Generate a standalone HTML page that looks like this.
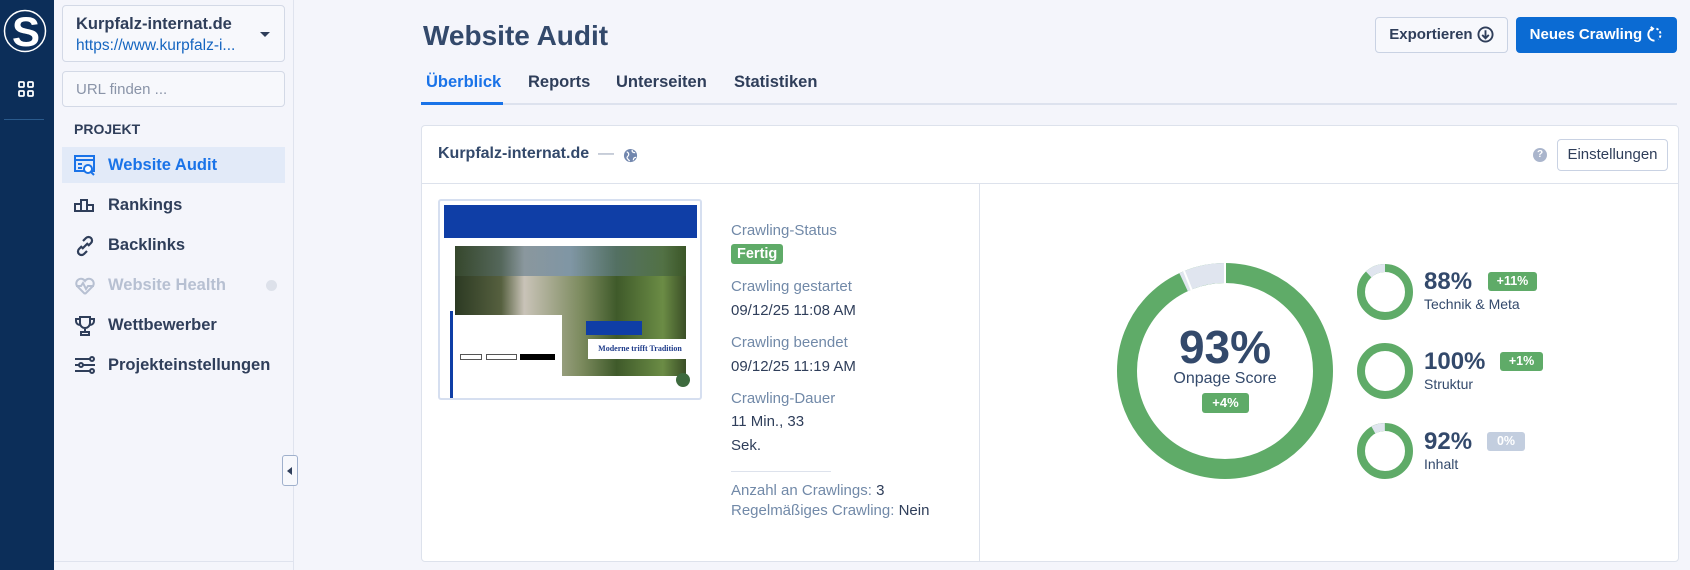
<!DOCTYPE html>
<html><head><meta charset="utf-8"><style>
*{box-sizing:border-box;margin:0;padding:0}
body{width:1690px;height:570px;overflow:hidden;background:#f4f5fb;font-family:"Liberation Sans",Arial,sans-serif;color:#2f3e5a;position:relative}
.abs{position:absolute}
.rail{left:0;top:0;width:54px;height:570px;background:#0c2e59}
.side{left:54px;top:0;width:240px;height:570px;background:#f4f5fb;border-right:1px solid #dfe3ee}
.sel{left:8px;top:5px;width:223px;height:57px;border:1px solid #d3d9e6;border-radius:4px;background:#f7f8fc}
.search{left:8px;top:71px;width:223px;height:36px;border:1px solid #d3d9e6;border-radius:4px;background:#f7f8fc;color:#8a94a8;font-size:15px;padding:9px 13px}
.nav{left:8px;width:223px;height:36px;font-size:16.5px;font-weight:bold;color:#2f3e5a;padding-left:46px;line-height:36px}
.nav svg{position:absolute;left:12px;top:8px}
.btn{border:1px solid #c9d2e3;border-radius:4px;background:#f7f8fc;font-size:15px;font-weight:bold;text-align:center}
.card{left:421px;top:125px;width:1258px;height:437px;background:#fff;border:1px solid #dde2ec;border-radius:4px}
.lbl{font-size:15px;color:#7189a8}
.val{font-size:15px;color:#2f3e5a}
.badge{display:inline-block;background:#5fab68;color:#fff;font-weight:bold;border-radius:3px}
</style></head><body>
<div class="abs rail">
  <svg class="abs" style="left:3px;top:9px" width="44" height="44" viewBox="0 0 44 44"><circle cx="22" cy="22" r="20.5" fill="#0c2e59" stroke="#fff" stroke-width="1.5"/><text x="23" y="37" text-anchor="middle" font-family="Liberation Sans" font-weight="bold" font-size="42" fill="#fff">S</text></svg>
  <svg class="abs" style="left:17px;top:80px" width="18" height="18" viewBox="0 0 18 18" fill="none" stroke="#fff" stroke-width="1.8"><rect x="2" y="2" width="5" height="5" rx="1"/><rect x="11" y="2" width="5" height="5" rx="1"/><rect x="2" y="11" width="5" height="5" rx="1"/><rect x="11" y="11" width="5" height="5" rx="1"/></svg>
  <div class="abs" style="left:4px;top:119px;width:40px;height:1px;background:#2a5a8c"></div>
</div>
<div class="abs side">
  <div class="abs sel"><div style="position:absolute;left:13px;top:9px;font-size:16.5px;font-weight:bold;color:#2f3e5a">Kurpfalz-internat.de</div><div style="position:absolute;left:13px;top:31px;font-size:15.5px;color:#1565c0">https://www.kurpfalz-i...</div><div style="position:absolute;right:14px;top:26px;width:0;height:0;border-left:5px solid transparent;border-right:5px solid transparent;border-top:5px solid #2f3e5a"></div></div>
  <div class="abs search">URL finden ...</div>
  <div class="abs" style="left:20px;top:121px;font-size:14px;font-weight:bold;color:#2f3e5a">PROJEKT</div>
  <div class="abs nav" style="top:147px;background:#e2eaf8;color:#1a73e8"><svg width="22" height="22" viewBox="0 0 22 22" fill="none" stroke="#1a73e8" stroke-width="2"><rect x="1" y="1" width="19" height="15"/><line x1="1" y1="5" x2="20" y2="5"/><line x1="4" y1="9" x2="8" y2="9"/><line x1="4" y1="13" x2="8" y2="13"/><circle cx="14" cy="14" r="4" fill="#fff"/><line x1="17" y1="17" x2="20" y2="20"/></svg>Website Audit</div>
  <div class="abs nav" style="top:187px"><svg width="22" height="22" viewBox="0 0 22 22" fill="none" stroke="#2f3e5a" stroke-width="2"><rect x="1" y="9" width="6" height="7"/><rect x="7" y="5" width="6" height="11"/><rect x="13" y="10" width="6" height="6"/></svg>Rankings</div>
  <div class="abs nav" style="top:227px"><svg width="22" height="22" viewBox="0 0 22 22" fill="none" stroke="#2f3e5a" stroke-width="2.2"><path d="M9 6l3-3a3.5 3.5 0 015 5l-3 3M13 16l-3 3a3.5 3.5 0 01-5-5l3-3M8 14l6-6"/></svg>Backlinks</div>
  <div class="abs nav" style="top:267px;color:#b7c0d2"><svg width="22" height="22" viewBox="0 0 22 22" fill="none" stroke="#b7c0d2" stroke-width="2"><path d="M11 19L3 11a4.5 4.5 0 018-5 4.5 4.5 0 018 5l-8 8M2 11h5l2-3 3 6 2-3h6"/></svg>Website Health<div style="position:absolute;right:8px;top:13px;width:11px;height:11px;border-radius:50%;background:#dde1ea"></div></div>
  <div class="abs nav" style="top:307px"><svg width="22" height="22" viewBox="0 0 22 22" fill="none" stroke="#2f3e5a" stroke-width="2"><path d="M6 2h10v6a5 5 0 01-10 0zM6 4H2v2a4 4 0 004 4M16 4h4v2a4 4 0 01-4 4M11 13v4M7 20h8v-3H7z"/></svg>Wettbewerber</div>
  <div class="abs nav" style="top:347px"><svg width="22" height="22" viewBox="0 0 22 22" fill="none" stroke="#2f3e5a" stroke-width="2"><path d="M1 4h15M1 10h4M9 10h12M1 16h15"/><circle cx="18" cy="4" r="2"/><circle cx="7" cy="10" r="2"/><circle cx="18" cy="16" r="2"/></svg>Projekteinstellungen</div>
  <div class="abs" style="left:0;top:561px;width:240px;height:1px;background:#dfe3ee"></div>
</div>
<div class="abs" style="left:282px;top:455px;width:16px;height:31px;border:1px solid #9fb0cc;border-radius:3px;background:#f7f8fc"><div style="position:absolute;left:4px;top:11px;border-top:4px solid transparent;border-bottom:4px solid transparent;border-right:5px solid #2f3e5a"></div></div>

<div class="abs" style="left:423px;top:20px;font-size:28px;font-weight:bold;color:#33496b">Website Audit</div>
<div class="abs" style="left:426px;top:73px;font-size:16.5px;font-weight:bold;color:#1a73e8">Überblick</div>
<div class="abs" style="left:528px;top:73px;font-size:16.5px;font-weight:bold">Reports</div>
<div class="abs" style="left:616px;top:73px;font-size:16.5px;font-weight:bold">Unterseiten</div>
<div class="abs" style="left:734px;top:73px;font-size:16.5px;font-weight:bold">Statistiken</div>
<div class="abs" style="left:421px;top:103px;width:1256px;height:2px;background:#dde2ee"></div>
<div class="abs" style="left:421px;top:102px;width:82px;height:3px;background:#1a73e8"></div>
<div class="abs btn" style="left:1375px;top:17px;width:133px;height:36px;line-height:34px">Exportieren <svg style="vertical-align:-4px" width="17" height="17" viewBox="0 0 18 18" fill="none" stroke="#2f3e5a" stroke-width="2"><circle cx="9" cy="9" r="7.5"/><path d="M9 4.5v8M5.5 9.5L9 13l3.5-3.5"/></svg></div>
<div class="abs" style="left:1516px;top:17px;width:161px;height:36px;line-height:36px;background:#0b6bd3;border-radius:4px;color:#fff;font-size:15px;font-weight:bold;text-align:center">Neues Crawling <svg style="vertical-align:-4px" width="17" height="17" viewBox="0 0 18 18" fill="none" stroke="#fff" stroke-width="2"><path d="M7 2.8A6.5 6.5 0 009 15.5" /><path d="M11 2.8A6.5 6.5 0 0113 14" stroke-dasharray="2.5 2"/><path d="M5 1l2.5 1.8L5.5 5"/></svg></div>

<div class="abs card">
  <div class="abs" style="left:16px;top:19px;font-size:16px;font-weight:bold;color:#33496b">Kurpfalz-internat.de <span style="color:#9aa6ba;font-weight:normal">&nbsp;—&nbsp;</span></div>
  <svg class="abs" style="left:201px;top:22px" width="15" height="15" viewBox="0 0 16 16"><circle cx="8" cy="8" r="7" fill="#7287ae"/><path d="M4 4c2 1 3 3 1 5s1 3 2 5M10 2c-1 2 1 3 3 3M11 13c0-2 1-3 3-3" stroke="#fff" stroke-width="1.3" fill="none"/></svg>
  <div class="abs" style="left:1111px;top:22px;width:14px;height:14px;border-radius:50%;background:#aab5cc;color:#fff;font-size:10px;font-weight:bold;text-align:center;line-height:14px">?</div>
  <div class="abs btn" style="left:1135px;top:13px;width:111px;height:32px;line-height:30px;font-weight:normal;background:#fff;color:#2f3e5a">Einstellungen</div>
  <div class="abs" style="left:0;top:57px;width:1256px;height:1px;background:#dde2ec"></div>
  <div class="abs" style="left:557px;top:58px;width:1px;height:378px;background:#dde2ec"></div>
  <div class="abs" style="left:16px;top:73px;width:264px;height:201px;border:2px solid #d6dff0;border-radius:3px;background:#fff;overflow:hidden">
    <div class="abs" style="left:4px;top:4px;width:253px;height:33px;background:#0f3ea6"></div>
    <div class="abs" style="left:15px;top:45px;width:231px;height:130px;background:linear-gradient(90deg,#2c3a23 0%,#56603f 20%,#c9c3b8 30%,#7b8a5d 55%,#3f5a2a 70%,#6b8c45 90%,#3a4e26 100%)"></div>
    <div class="abs" style="left:15px;top:45px;width:231px;height:30px;background:linear-gradient(90deg,rgba(60,80,50,.6),rgba(120,150,200,.6),rgba(60,90,40,.7))"></div>
    <div class="abs" style="left:10px;top:110px;width:3px;height:90px;background:#0f3ea6"></div>
    <div class="abs" style="left:14px;top:114px;width:108px;height:62px;background:#fff"></div>
    <div class="abs" style="left:20px;top:153px;width:22px;height:6px;border:1px solid #555"></div>
    <div class="abs" style="left:46px;top:153px;width:31px;height:6px;border:1px solid #555"></div>
    <div class="abs" style="left:80px;top:153px;width:35px;height:6px;background:#000"></div>
    <div class="abs" style="left:146px;top:120px;width:56px;height:14px;background:#0f3ea6"></div>
    <div class="abs" style="left:148px;top:138px;width:104px;height:20px;background:#fff;color:#1f3c8a;font-family:'Liberation Serif';font-size:8px;font-weight:bold;text-align:center;line-height:20px">Moderne trifft Tradition</div>
    <div class="abs" style="left:236px;top:172px;width:14px;height:14px;border-radius:50%;background:#3d6a3e"></div>
  </div>
  <div class="abs lbl" style="left:309px;top:96px">Crawling-Status</div>
  <div class="abs badge" style="left:309px;top:118px;font-size:14.5px;padding:2px 6px">Fertig</div>
  <div class="abs lbl" style="left:309px;top:152px">Crawling gestartet</div>
  <div class="abs val" style="left:309px;top:176px">09/12/25 11:08 AM</div>
  <div class="abs lbl" style="left:309px;top:208px">Crawling beendet</div>
  <div class="abs val" style="left:309px;top:232px">09/12/25 11:19 AM</div>
  <div class="abs lbl" style="left:309px;top:264px">Crawling-Dauer</div>
  <div class="abs val" style="left:309px;top:287px">11 Min., 33</div>
  <div class="abs val" style="left:309px;top:311px">Sek.</div>
  <div class="abs" style="left:309px;top:345px;width:100px;height:1px;background:#dde2ec"></div>
  <div class="abs lbl" style="left:309px;top:356px">Anzahl an Crawlings:<span style="color:#2f3e5a"> 3</span></div>
  <div class="abs lbl" style="left:309px;top:376px">Regelmäßiges Crawling:<span style="color:#2f3e5a"> Nein</span></div>
</div>

<svg class="abs" style="left:0;top:0" width="1690" height="570">
  <circle cx="1225" cy="371" r="98" fill="none" stroke="#5fab68" stroke-width="20"/>
  <circle cx="1225" cy="371" r="98" fill="none" stroke="#e0e5ef" stroke-width="20" stroke-dasharray="43 600" transform="rotate(-115 1225 371)" />
  <line x1="1225" y1="262" x2="1225" y2="284" stroke="#fff" stroke-width="2"/>
  <line x1="1184" y1="271" x2="1192" y2="291" stroke="#fff" stroke-width="2"/>
  <g fill="none" stroke-width="8">
    <circle cx="1385" cy="292" r="24" stroke="#5fab68"/>
    <circle cx="1385" cy="292" r="24" stroke="#e0e5ef" stroke-dasharray="18 200" transform="rotate(-133 1385 292)"/>
    <circle cx="1385" cy="371" r="24" stroke="#5fab68"/>
    <circle cx="1385" cy="451" r="24" stroke="#5fab68"/>
    <circle cx="1385" cy="451" r="24" stroke="#e0e5ef" stroke-dasharray="12 200" transform="rotate(-119 1385 451)"/>
  </g>
</svg>
<div class="abs" style="left:1125px;top:322px;width:200px;text-align:center;font-size:46px;font-weight:bold;color:#33496b;line-height:50px">93%</div>
<div class="abs" style="left:1125px;top:370px;width:200px;text-align:center;font-size:16px;color:#33496b">Onpage Score</div>
<div class="abs badge" style="left:1202px;top:393px;width:47px;height:20px;font-size:13px;text-align:center;line-height:20px">+4%</div>

<div class="abs" style="left:1424px;top:268px;font-size:24px;font-weight:bold;color:#33496b">88%</div>
<div class="abs badge" style="left:1488px;top:272px;width:49px;height:19px;font-size:12.5px;text-align:center;line-height:19px">+11%</div>
<div class="abs" style="left:1424px;top:296px;font-size:14px;color:#33496b">Technik &amp; Meta</div>
<div class="abs" style="left:1424px;top:348px;font-size:24px;font-weight:bold;color:#33496b">100%</div>
<div class="abs badge" style="left:1500px;top:352px;width:43px;height:19px;font-size:12.5px;text-align:center;line-height:19px">+1%</div>
<div class="abs" style="left:1424px;top:376px;font-size:14px;color:#33496b">Struktur</div>
<div class="abs" style="left:1424px;top:428px;font-size:24px;font-weight:bold;color:#33496b">92%</div>
<div class="abs badge" style="left:1487px;top:432px;width:38px;height:19px;font-size:12.5px;text-align:center;line-height:19px;background:#c3cedf">0%</div>
<div class="abs" style="left:1424px;top:456px;font-size:14px;color:#33496b">Inhalt</div>
</body></html>
